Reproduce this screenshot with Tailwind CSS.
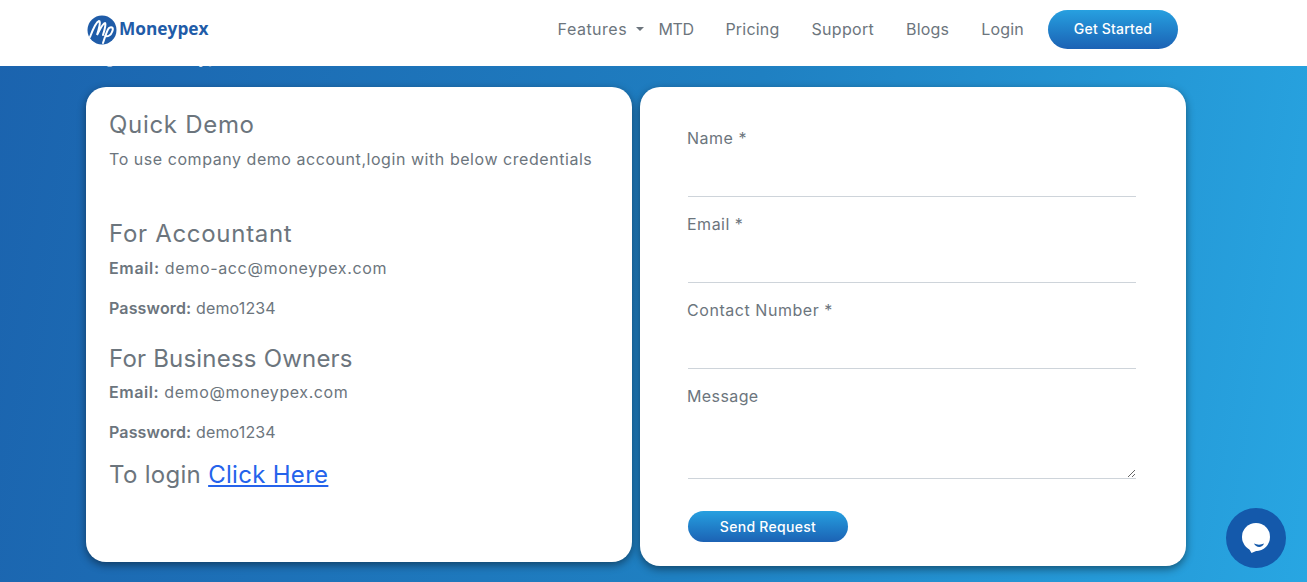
<!DOCTYPE html>
<html lang="en">
<head>
    <meta charset="UTF-8">
    <meta name="viewport" content="width=device-width, initial-scale=1.0">
    <title>Quick Demo - Moneypex</title>
    <script src="https://cdn.jsdelivr.net/npm/@tailwindcss/browser@4"></script>
</head>
<body class="h-[582px] overflow-hidden font-['Inter',sans-serif] bg-[linear-gradient(100deg,#1b63ae_0%,#1f80c2_55%,#28a6e2_100%)] text-[#6c757d]">
    <!-- Top Navigation Bar -->
    <nav class="relative z-10 h-[66px] bg-white flex items-center pl-[87px] pr-[129px] pb-[8px]">
        <a href="#" class="flex items-center gap-[2px]">
            <svg width="30" height="30" viewBox="0 0 30 30" class="mt-[2px]">
                <circle cx="15" cy="15" r="14.5" fill="#1f5ca8"/>
                <path d="M3 22C6 14 9 7 12 6c2 0 0 8-2 14 3-6 6-12 8-12 1 0 0 6-2 12" fill="none" stroke="#fff" stroke-width="2" stroke-linecap="round"/>
                <path d="M16 28c2-6 4-13 6-15 3-2 5 0 3 4-1 3-4 5-7 4" fill="none" stroke="#fff" stroke-width="2" stroke-linecap="round"/>
            </svg>
            <span class="text-[17.3px] font-bold text-[#1f5ca8] font-['Open_Sans',sans-serif]">Moneypex</span>
        </a>
        <div class="ml-auto flex items-center text-[16px]">
            <a href="#" class="w-[78px] tracking-[0.5px]">Features</a>
            <span class="w-0 h-0 border-x-[4px] border-x-transparent border-t-[4px] border-t-[#6c757d] mr-[15px]"></span>
            <a href="#" class="mr-[32px] tracking-[-0.5px]">MTD</a>
            <a href="#" class="mr-[32px] tracking-[0.2px]">Pricing</a>
            <a href="#" class="mr-[32px] tracking-[0.3px]">Support</a>
            <a href="#" class="mr-[32px] tracking-[0.2px]">Blogs</a>
            <a href="#" class="mr-[24px] tracking-[0.2px]">Login</a>
            <a href="#" class="w-[130px] h-[39px] pb-[1px] rounded-full bg-gradient-to-b from-[#27a0e0] to-[#1c62b4] text-white text-[14px] font-medium tracking-[0.2px] flex items-center justify-center">Get Started</a>
        </div>
    </nav>

    <!-- Heading cut off by the nav -->
    <h1 class="-mt-[20px] pl-[85px] h-[22px] overflow-hidden text-white text-[16.5px] font-semibold leading-[22px]">Login to Moneypex</h1>

    <!-- Cards -->
    <div class="mt-[19px] pl-[86px] flex items-start gap-[8px]">
        <div class="w-[546px] h-[475px] bg-white rounded-[20px] shadow-[0_3px_9px_rgba(0,0,0,0.45)] pl-[23px] pt-[22px]">
            <h2 class="text-[24px] leading-[32px] tracking-[0.7px]">Quick Demo</h2>
            <p class="mt-[6px] text-[16px] leading-[24px] tracking-[0.55px]">To use company demo account,login with below credentials</p>
            <h3 class="mt-[47px] text-[24px] leading-[32px] tracking-[0.7px]">For Accountant</h3>
            <p class="mt-[6px] text-[16px] leading-[24px] tracking-[0.65px]"><b class="font-semibold">Email:</b> demo-acc@moneypex.com</p>
            <p class="mt-[16px] text-[16px] leading-[24px] tracking-[0.15px]"><b class="font-semibold">Password:</b> demo1234</p>
            <h3 class="mt-[23px] text-[24px] leading-[32px] tracking-[0.2px]">For Business Owners</h3>
            <p class="mt-[5px] text-[16px] leading-[24px] tracking-[0.58px]"><b class="font-semibold">Email:</b> demo@moneypex.com</p>
            <p class="mt-[16px] text-[16px] leading-[24px] tracking-[0.15px]"><b class="font-semibold">Password:</b> demo1234</p>
            <p class="mt-[15px] text-[24px] leading-[32px] tracking-[0.3px]">To login <a href="#" class="text-[#2563eb] underline">Click Here</a></p>
        </div>
        <form class="w-[546px] h-[479px] bg-white rounded-[20px] shadow-[0_3px_9px_rgba(0,0,0,0.45)] pl-[48px] pr-[50px] pt-[39px]">
            <label class="block -ml-[1px] text-[16px] leading-[24px] tracking-[0.5px]">Name *</label>
            <input type="text" class="block w-full h-[47px] border-b border-[#ced4da] outline-none">
            <label class="block -ml-[1px] mt-[15px] text-[16px] leading-[24px] tracking-[0.5px]">Email *</label>
            <input type="text" class="block w-full h-[47px] border-b border-[#ced4da] outline-none">
            <label class="block -ml-[1px] mt-[15px] text-[16px] leading-[24px] tracking-[0.55px]">Contact Number *</label>
            <input type="text" class="block w-full h-[47px] border-b border-[#ced4da] outline-none">
            <label class="block -ml-[1px] mt-[15px] text-[16px] leading-[24px] tracking-[0.4px]">Message</label>
            <textarea class="block w-full h-[71px] border-b border-[#ced4da] outline-none resize-y"></textarea>
            <button type="button" class="block mt-[32px] w-[160px] h-[31px] pb-[1px] rounded-full bg-gradient-to-b from-[#27a0e0] to-[#1c62b4] text-white text-[14px] font-medium tracking-[0.3px]">Send Request</button>
        </form>
    </div>

    <!-- Chat widget -->
    <div class="fixed right-[21px] bottom-[14px] w-[60px] h-[60px] rounded-full bg-[#1459ab]">
        <svg width="60" height="60" viewBox="0 0 60 60">
            <circle cx="30" cy="29" r="14" fill="#fff"/>
            <path d="M22 39l3.500 6 7-3z" fill="#fff"/>
            <path d="M28 35.500c3 1.500 7 1.500 10 0-1.500 4.500-8 4.500-10 0z" fill="#1459ab"/>
        </svg>
    </div>
</body>
</html>
